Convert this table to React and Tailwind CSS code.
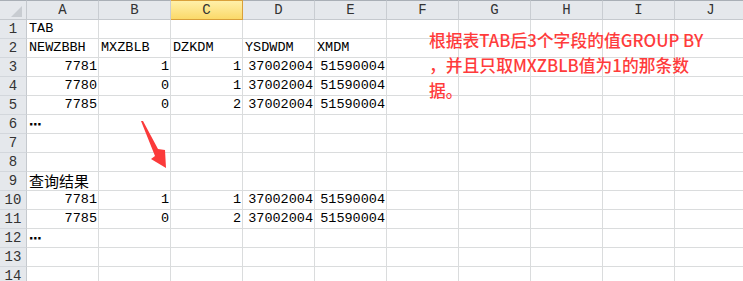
const COLS = ["A", "B", "C", "D", "E", "F", "G", "H", "I", "J"];

// each row: cells for A..E, numbers are right aligned
const num = (v) => ({ v, right: true });
const txt = (v) => ({ v, right: false });

const ROWS = [
  [txt("TAB")],
  [txt("NEWZBBH"), txt("MXZBLB"), txt("DZKDM"), txt("YSDWDM"), txt("XMDM")],
  [num("7781"), num("1"), num("1"), num("37002004"), num("51590004")],
  [num("7780"), num("0"), num("1"), num("37002004"), num("51590004")],
  [num("7785"), num("0"), num("2"), num("37002004"), num("51590004")],
  [{ v: "⋯", dots: true }],
  [],
  [],
  [{ v: "查询结果", cjk: true }],
  [num("7781"), num("1"), num("1"), num("37002004"), num("51590004")],
  [num("7785"), num("0"), num("2"), num("37002004"), num("51590004")],
  [{ v: "⋯", dots: true }],
  [],
  [],
];

const Cell = ({ cell }) => {
  if (!cell) return <div className="border-r border-b border-[#dadcdd]" />;
  return (
    <div
      className={`flex items-end pb-[1px] overflow-visible whitespace-nowrap border-r border-b border-[#dadcdd] ${
        cell.right ? "justify-end pr-[1px]" : "pl-[2px]"
      }`}
    >
      {cell.dots ? (
        <span className="font-['DejaVu_Sans',sans-serif] text-[13px] leading-[17px] font-bold text-black -mb-[1px]">
          {cell.v}
        </span>
      ) : cell.cjk ? (
        <span className="font-['Noto_Sans_CJK_SC',sans-serif] text-[15px] leading-[17px] text-black">
          {cell.v}
        </span>
      ) : (
        <span className="text-[13.5px] leading-[17px] text-black">{cell.v}</span>
      )}
    </div>
  );
};

export default function App() {
  return (
    <div className="relative w-[743px] h-[281px] overflow-hidden bg-white font-['Liberation_Mono','Noto_Sans_CJK_SC',monospace]">
      <div className="grid grid-cols-[27px_repeat(10,72px)] grid-rows-[20px_repeat(14,19px)]">
        {/* corner */}
        <div className="relative bg-[#e5e8ec] border-t border-t-[#a9afb6] border-r border-b border-[#c5c9ce]">
          <svg className="absolute left-[11px] top-[5px]" width="11" height="11" viewBox="0 0 11 11">
            <polygon points="11,0 11,11 0,11" fill="#c8ccd1" />
          </svg>
        </div>
        {COLS.map((c) => (
          <div
            key={c}
            className={`flex items-center justify-center text-[14px] border-t border-r border-b ${
              c === "C"
                ? "bg-gradient-to-b from-[#fff0a8] to-[#fbd968] border-[#d9a03a] text-[#333]"
                : "bg-[#e5e8ec] border-t-[#a9afb6] border-r-[#c9cdd2] border-b-[#c5c9ce] text-[#333]"
            }`}
          >
            {c}
          </div>
        ))}
        {ROWS.map((row, r) => (
          <div key={r} className="contents">
            <div className="flex items-center justify-center text-[14px] text-[#333] bg-[#e5e8ec] border-r border-b border-r-[#c5c9ce] border-b-[#d3d7dc]">
              {r + 1}
            </div>
            {COLS.map((c, i) => (
              <Cell key={c} cell={row[i]} />
            ))}
          </div>
        ))}
      </div>

      {/* red arrow drawn on the sheet */}
      <svg className="absolute left-0 top-0 pointer-events-none" width="743" height="281">
        <polygon
          points="141,121 143,121 158,149 165,150 166,168 151,159 155,156"
          fill="#fb3a3a"
        />
      </svg>

      {/* floating text box */}
      <div className="absolute left-[429px] top-[28px] font-['Noto_Sans_CJK_SC',sans-serif] font-medium text-[16.8px] leading-[25px] text-[#ff3b3b] whitespace-nowrap">
        <div>根据表TAB后3个字段的值GROUP BY</div>
        <div>，并且只取MXZBLB值为1的那条数</div>
        <div>据。</div>
      </div>
    </div>
  );
}
